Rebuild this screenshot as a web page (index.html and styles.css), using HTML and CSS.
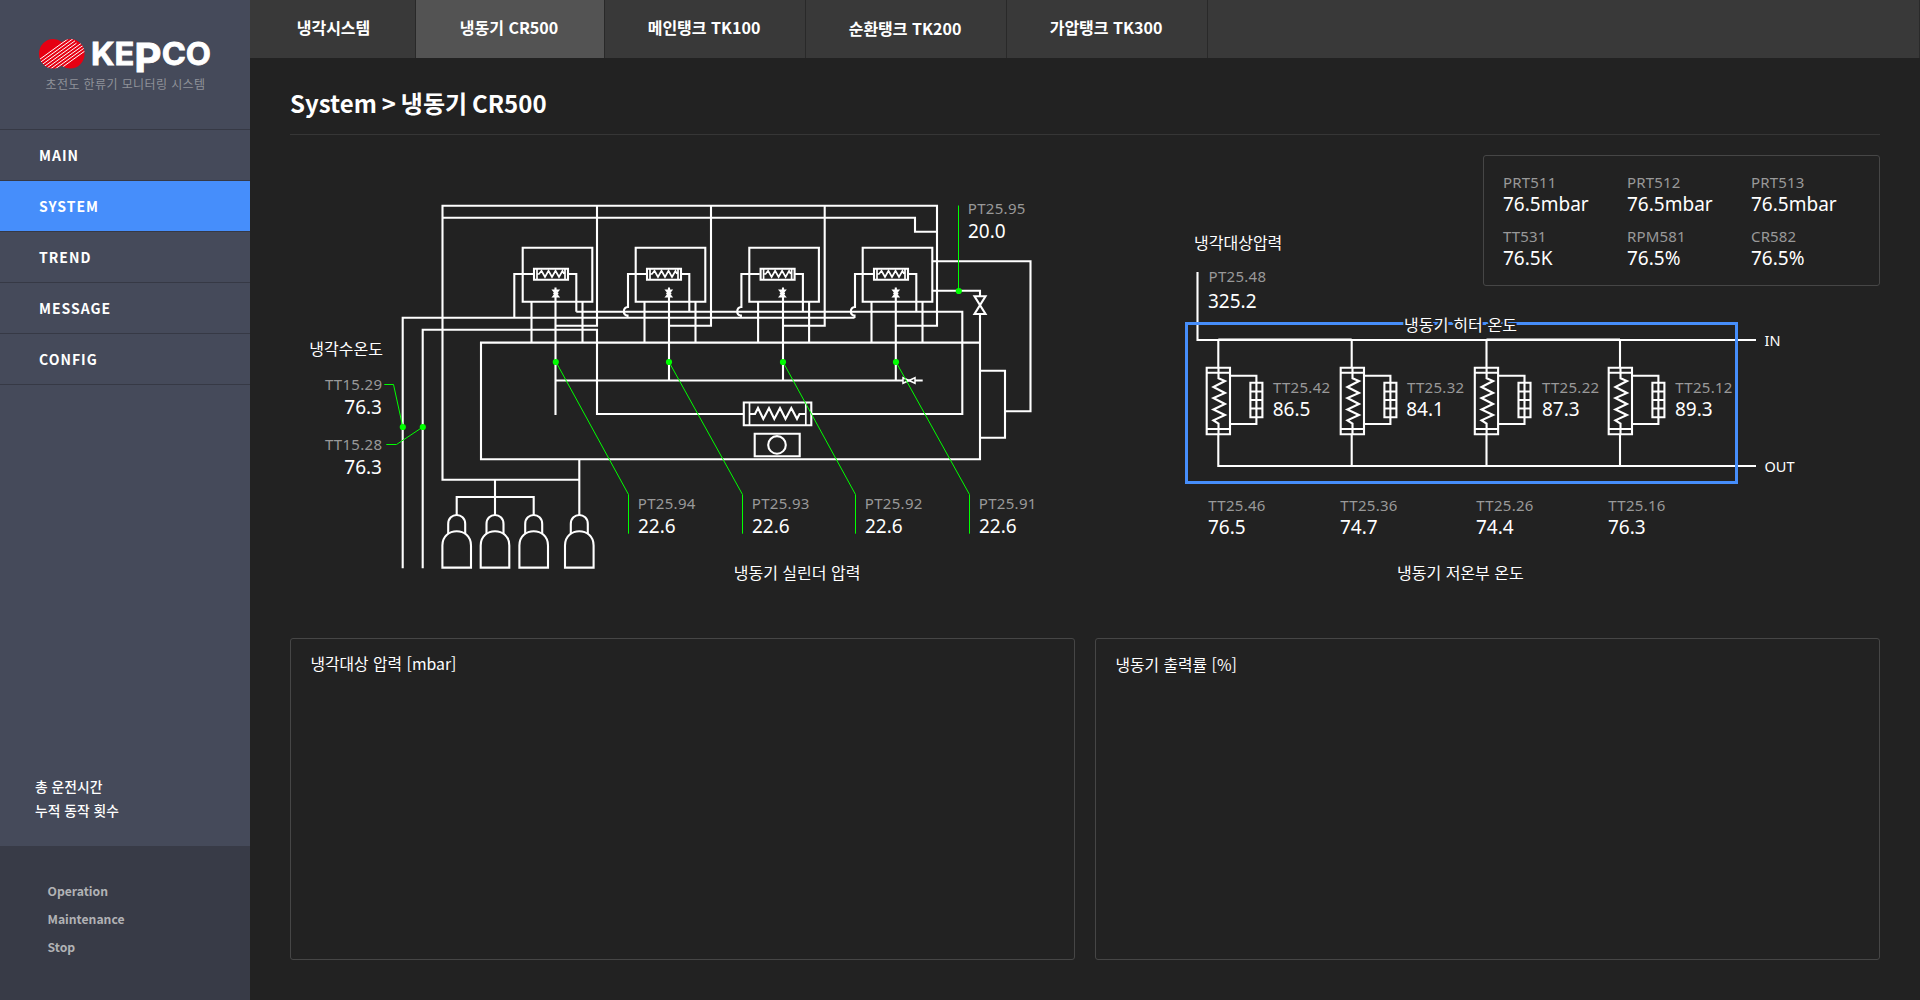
FILE: index.html
```html
<!DOCTYPE html>
<html lang="ko">
<head>
<meta charset="utf-8">
<title>초전도 한류기 모니터링 시스템</title>
<link rel="stylesheet" href="styles.css">
</head>
<body>
<div class="app">
  <aside class="sidebar">
    <div class="brand">
      <svg class="brand-logo" width="174" height="36" viewBox="38 38 174 36" role="img" aria-label="KEPCO">
        <defs>
          <clipPath id="emblem"><ellipse cx="53.3" cy="53.8" rx="14.3" ry="14.8"/><ellipse cx="70.3" cy="53.8" rx="14.3" ry="14.8"/></clipPath>
        </defs>
        <g clip-path="url(#emblem)">
          <rect class="brand-red" x="38" y="38" width="48" height="32"/>
          <path class="brand-stripes" d="M36 62L72 36M37.5 64.4L73.5 38.4M39 66.8L75 40.8M40.5 69.2L76.5 43.2M42 71.6L84 41.3M44 73.6L86 43.3M46 75.6L88 45.3M48 77.6L90 47.3"/>
        </g>
        <text class="brand-name" x="91" y="65.4" textLength="120" lengthAdjust="spacingAndGlyphs">KE<tspan class="brand-p" dy="7">P</tspan><tspan dy="-7">CO</tspan></text>
      </svg>
      <p class="brand-sub">초전도 한류기 모니터링 시스템</p>
    </div>
    <nav class="menu">
      <a class="menu-item">MAIN</a>
      <a class="menu-item menu-item--active">SYSTEM</a>
      <a class="menu-item">TREND</a>
      <a class="menu-item">MESSAGE</a>
      <a class="menu-item">CONFIG</a>
    </nav>
    <div class="totals"><p>총 운전시간</p><p>누적 동작 횟수</p></div>
    <div class="modes"><p>Operation</p><p>Maintenance</p><p>Stop</p></div>
  </aside>

  <div class="content">
    <nav class="tabs">
      <a class="tab tab--first">냉각시스템</a>
      <a class="tab tab--second tab--active">냉동기 CR500</a>
      <a class="tab">메인탱크 TK100</a>
      <a class="tab tab--low">순환탱크 TK200</a>
      <a class="tab">가압탱크 TK300</a>
    </nav>
    <main class="page">
      <h1 class="page-title">System &gt; 냉동기 CR500</h1>

      <section class="diagram">
        <svg class="plant" width="1590" height="503" viewBox="290 135 1590 503">
          <defs>
            <g id="cylinder">
              <path d="M522.7 247.7H592.3V301.7H522.7Z"/>
              <path d="M531.5 301.7V342M582.5 301.7V342"/>
              <path d="M534 268.7H568V279.7H534Z"/>
              <path class="fine" d="M537 268V280M565 268V280M537 274H539L541.5 270.8L545 277L548.5 270.8L552 277L555.5 270.8L559 277L562.5 270.8L564 274"/>
              <path d="M568 274H576.3V311.7"/>
              <path class="fine" d="M553.2 290.3H558.4L553.2 296.7H558.4ZM553.2 293.5H558.4"/>
            </g>
            <g id="feed"><path d="M873.3 274H855V307C849.5 307.5 849.5 315.5 854.5 315.5V318"/></g>
            <g id="bottle">
              <path d="M-8.5 534V524C-8.5 512 8.5 512 8.5 524V534"/>
              <path d="M-14.3 567.6V545.5C-14.3 526.5 14.3 526.5 14.3 545.5V567.6Z"/>
            </g>
            <g id="heater">
              <path d="M0 367.7H23.3V434.3H0ZM0 372.7H23.3M0 429H23.3"/>
              <path d="M11.8 367.7V378.3L18.3 381L6.7 387L18.3 393L6.7 398L18.3 404L6.7 409.5L18.3 415L6.7 420.3L11.8 423.5V434"/>
              <path d="M23.3 375.7H49.7V424H23.3"/>
              <path class="grid-fill" d="M43.7 382.7H55.7V417.3H43.7Z"/>
              <path d="M49.7 382.7V417.3M43.7 391.5H55.7M43.7 400H55.7M43.7 408.5H55.7"/>
            </g>
          </defs>

          <g class="pipe">
            <path d="M579.3 479.7H442.5V205.7H937V325.7H895.8"/>
            <path d="M442.5 217.8H915V231.7H937"/>
            <path d="M597 205.5V325.7H555.5M711 205.5V325.7H669M824.7 205.5V325.7H783"/>
            <path d="M402.7 568.3V317.8H854.5"/>
            <path d="M422.7 568.3V329.7H597V414H962.3V311.7H576.3"/>
            <path d="M980 342.6H481V459.2H980V314"/>
            <path d="M514.3 317.7V274H534"/>
            <use href="#cylinder"/><use href="#cylinder" x="113"/><use href="#cylinder" x="226.6"/><use href="#cylinder" x="340"/>
            <use href="#feed" x="-227"/><use href="#feed" x="-113.6"/><use href="#feed"/>
            <path d="M555.5 287.5V415M669 287.5V380.5M783 287.5V380.5M895.8 287.5V380.5M555.5 380.5H922.7"/>
            <path class="valve" d="M903 377.7V383.3L915 377.7V383.3Z"/>
            <path d="M932.3 261.3H1030.5V411.2H1005M980 370.7H1005V437.7H980"/>
            <path d="M932.3 290.8H980V296M974.5 296.3H985.5L974.5 314H985.5Z"/>
            <path class="grid-fill" d="M743.8 402.5H811.3V425.3H743.8Z"/>
            <path class="fine" d="M749.5 402V425M805.8 402V425"/>
            <path d="M749.5 414H755L758 408L763.3 419L769 408L774.3 419L780 408L785.5 419L791.3 408L797 419L799.5 414H805.5"/>
            <path d="M754.7 433.7H799.7V456.3H754.7Z"/>
            <circle cx="777" cy="444.9" r="8.8"/>
            <path d="M579.3 459V515M495 479.5V515M456.7 515V497H533.7V515"/>
            <use href="#bottle" x="456.7"/><use href="#bottle" x="495"/><use href="#bottle" x="533.7"/><use href="#bottle" x="579.3"/>

            <path d="M1197.5 272V340H1756"/>
            <path class="bus-shade" d="M1218.3 338.5H1351.7M1486.5 338.5H1620"/>
            <path d="M1218.3 339V368M1351.7 339V368M1486.5 339V368M1620 339V368"/>
            <path d="M1218.3 434V466H1756M1351.7 434V466M1486.5 434V466M1620 434V466"/>
            <use href="#heater" x="1206.7"/><use href="#heater" x="1340.7"/><use href="#heater" x="1474.8"/><use href="#heater" x="1608.7"/>
          </g>

          <rect class="heater-zone" x="1186.5" y="323.5" width="550" height="159"/>

          <g class="lead">
            <path d="M958.5 205.5V291"/>
            <path d="M384.3 384.5H393.5L402.8 427M386.3 444.5H396.5L422.8 427"/>
            <path d="M556 362L628.5 494.5V533.7M669 362L742.5 494.5V533.7M783 362L855.5 494.5V533.7M896 362L969.5 494.5V533.7"/>
          </g>
          <g class="sensor">
            <circle cx="958.8" cy="291" r="3.1"/><circle cx="402.8" cy="427" r="3.1"/><circle cx="422.8" cy="427" r="3.1"/>
            <circle cx="555.8" cy="362" r="3.1"/><circle cx="669" cy="362" r="3.1"/><circle cx="783" cy="362" r="3.1"/><circle cx="896" cy="362" r="3.1"/>
          </g>

          <g class="caption">
            <text x="309.3" y="355.3">냉각수온도</text>
            <text x="733.7" y="579.3">냉동기 실린더 압력</text>
            <text x="1194" y="248.6">냉각대상압력</text>
            <text class="caption-cut" x="1404" y="330.6" textLength="113">냉동기 히터 온도</text>
            <text x="1397" y="579.3">냉동기 저온부 온도</text>
          </g>
          <g class="tag">
            <text x="967.8" y="213.7">PT25.95</text>
            <text class="tag-end" x="382.3" y="390">TT15.29</text><text class="tag-end" x="382.3" y="449.8">TT15.28</text>
            <text x="637.8" y="508.8">PT25.94</text><text x="751.8" y="508.8">PT25.93</text><text x="864.8" y="508.8">PT25.92</text><text x="978.8" y="508.8">PT25.91</text>
            <text x="1208.5" y="282">PT25.48</text>
            <text x="1273" y="393">TT25.42</text><text x="1407" y="393">TT25.32</text><text x="1542" y="393">TT25.22</text><text x="1675.3" y="393">TT25.12</text>
            <text x="1208.3" y="510.8">TT25.46</text><text x="1340.3" y="510.8">TT25.36</text><text x="1476.3" y="510.8">TT25.26</text><text x="1608.3" y="510.8">TT25.16</text>
          </g>
          <g class="value">
            <text x="968" y="237.5">20.0</text>
            <text class="value-end" x="382" y="413.7">76.3</text><text class="value-end" x="382" y="473.7">76.3</text>
            <text x="638" y="532.9">22.6</text><text x="752" y="532.9">22.6</text><text x="865" y="532.9">22.6</text><text x="979" y="532.9">22.6</text>
            <text x="1208" y="307.7">325.2</text>
            <text x="1272.7" y="416">86.5</text><text x="1406.2" y="416">84.1</text><text x="1542" y="416">87.3</text><text x="1675" y="416">89.3</text>
            <text x="1208" y="533.9">76.5</text><text x="1340" y="533.9">74.7</text><text x="1476" y="533.9">74.4</text><text x="1608" y="533.9">76.3</text>
          </g>
          <g class="port"><text x="1764.5" y="345.7">IN</text><text x="1764.5" y="471.7">OUT</text></g>
        </svg>

        <dl class="readings">
          <div><dt>PRT511</dt><dd>76.5mbar</dd></div>
          <div><dt>PRT512</dt><dd>76.5mbar</dd></div>
          <div><dt>PRT513</dt><dd>76.5mbar</dd></div>
          <div><dt>TT531</dt><dd>76.5K</dd></div>
          <div><dt>RPM581</dt><dd>76.5%</dd></div>
          <div><dt>CR582</dt><dd>76.5%</dd></div>
        </dl>
      </section>

      <section class="charts">
        <article class="chart"><h2>냉각대상 압력 [mbar]</h2></article>
        <article class="chart chart--low"><h2>냉동기 출력률 [%]</h2></article>
      </section>
    </main>
  </div>
</div>
</body>
</html>
```
FILE: styles.css
```css
* { box-sizing: border-box; }
body, p, h1, h2, dl, dd { margin: 0; }
body {
  background: #222;
  color: #fff;
  font-family: "Noto Sans CJK KR", sans-serif;
}
.app { display: flex; width: 1920px; height: 1000px; overflow: hidden; }

/* Sidebar */
.sidebar { display: flex; flex-direction: column; width: 250px; background: #454a5a; }
.brand { height: 129px; padding: 38px 0 0 38px; }
.brand-logo { display: block; overflow: visible; }
.brand-red { fill: #e60012; }
.brand-stripes { stroke: #fff; stroke-width: 1; fill: none; }
.brand-name { fill: #fff; font: 700 31px Inter, sans-serif; stroke: #fff; stroke-width: .8; }
.brand-p { font-size: 40px; }
.brand-sub { margin-left: 7.5px; font-size: 12px; line-height: 19px; letter-spacing: .4px; color: #8f9299; white-space: nowrap; }
.menu { border-top: 1px solid #363945; }
.menu-item {
  display: block;
  height: 51px;
  padding-left: 39px;
  border-bottom: 1px solid #363945;
  font-size: 14px;
  font-weight: 700;
  line-height: 51px;
  letter-spacing: 1px;
}
.menu-item--active { background: #468efb; }
.totals { margin-top: auto; padding: 0 0 24px 35px; font-size: 13.8px; font-weight: 500; line-height: 24px; }
.modes { height: 154px; padding: 31px 0 0 47.5px; background: #383b47; color: #b1b2b5; font-size: 12.2px; font-weight: 700; line-height: 28px; }

/* Top tabs */
.content { flex: 1; }
.tabs { display: flex; height: 58px; background: #393939; border-right: 1px solid #2a2a2a; }
.tab {
  width: 201px;
  padding-right: 2px;
  border-right: 1px solid #292929;
  font-size: 16px;
  font-weight: 700;
  line-height: 54px;
  text-align: center;
}
.tab--first { width: 166px; padding: 0 0 0 2px; }
.tab--second { width: 189px; }
.tab--active { background: #535353; }
.tab--low { line-height: 56px; }

/* Page */
.page { padding: 0 40px; }
.page-title { height: 77px; border-bottom: 1px solid #363636; font-size: 24px; font-weight: 700; line-height: 90px; word-spacing: -1.8px; }
.diagram { position: relative; height: 503px; }
.plant { display: block; }
.pipe { fill: none; stroke: #fff; stroke-width: 2.1; }
.fine { stroke-width: 1.7; }
.valve { fill: #222; stroke-width: 1.5; }
.bus-shade { stroke: #999; stroke-width: 1; }
.grid-fill { fill: #222; }
.heater-zone { fill: none; stroke: #468efb; stroke-width: 3; }
.lead { fill: none; stroke: #0f0; stroke-width: 1; }
.sensor { fill: #0f0; }
.caption { fill: #fff; font-size: 16px; }
.caption-cut { paint-order: stroke; stroke: #222; stroke-width: 4px; }
.tag { fill: #999; font: 15px "Noto Sans", sans-serif; letter-spacing: .3px; }
.value { fill: #fff; font: 19px "Noto Sans", sans-serif; }
.tag-end, .value-end { text-anchor: end; }
.port { fill: #fff; font: 14.5px "Noto Sans", sans-serif; }

.readings {
  position: absolute;
  top: 20px;
  right: 0;
  display: grid;
  grid-template-columns: repeat(3, 124px);
  align-content: start;
  row-gap: 10px;
  width: 397px;
  height: 131px;
  padding: 14px 0 0 19px;
  border: 1px solid #464646;
  border-radius: 3px;
  font-family: "Noto Sans", sans-serif;
}
.readings > div { height: 44px; }
.readings dt { font-size: 15px; line-height: 24px; letter-spacing: .15px; color: #999; }
.readings dd { font-size: 19px; line-height: 20px; }

/* Charts */
.charts { display: grid; grid-template-columns: 1fr 1fr; gap: 20px; }
.chart { height: 322px; padding: 13px 19.5px; border: 1px solid #464646; border-radius: 3px; }
.chart h2 { font-size: 15.8px; font-weight: 400; line-height: 24px; }
.chart--low { padding-top: 14px; }
```
